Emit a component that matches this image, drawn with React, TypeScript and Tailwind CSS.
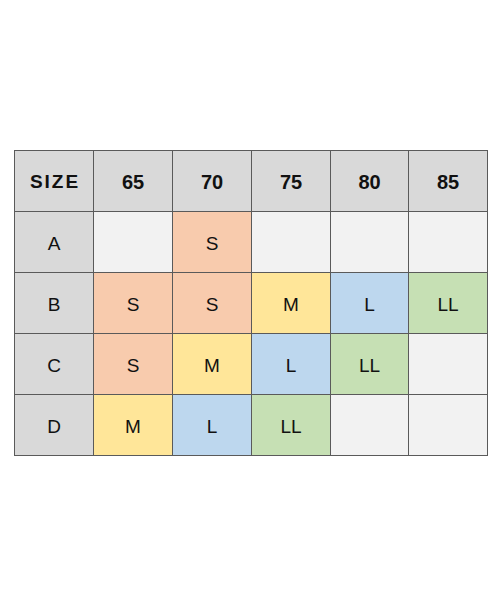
import React from 'react';

type Size = 'S' | 'M' | 'L' | 'LL' | '';

const colours: Record<Size, string> = {
  S: 'bg-[#f8cbad]',
  M: 'bg-[#ffe699]',
  L: 'bg-[#bdd7ee]',
  LL: 'bg-[#c6e0b4]',
  '': 'bg-[#f2f2f2]',
};

const bands = ['65', '70', '75', '80', '85'];

const rows: { cup: string; sizes: Size[] }[] = [
  { cup: 'A', sizes: ['', 'S', '', '', ''] },
  { cup: 'B', sizes: ['S', 'S', 'M', 'L', 'LL'] },
  { cup: 'C', sizes: ['S', 'M', 'L', 'LL', ''] },
  { cup: 'D', sizes: ['M', 'L', 'LL', '', ''] },
];

const App: React.FC = () => {
  return (
    <div className="w-[500px] h-[600px] bg-white font-['Liberation_Sans',Arial,sans-serif] text-[#111]">
      <div className="pt-[150px] pl-[14px]">
        <div className="grid grid-cols-[78px_78px_78px_78px_77px_78px] auto-rows-[60px] gap-px p-px bg-[#5a5a5a] w-fit">
          {/* Header */}
          <div className="bg-[#d9d9d9] flex items-center justify-center pt-[2px] text-[19px] font-bold tracking-[2px] pl-[2px]">
            SIZE
          </div>
          {bands.map((b) => (
            <div key={b} className="bg-[#d9d9d9] flex items-center justify-center pt-[2px] text-[20px] font-bold">
              {b}
            </div>
          ))}

          {/* Body */}
          {rows.map((row) => (
            <React.Fragment key={row.cup}>
              <div className="bg-[#d9d9d9] flex items-center justify-center pt-[4px] text-[19px]">
                {row.cup}
              </div>
              {row.sizes.map((s, i) => (
                <div key={i} className={`${colours[s]} flex items-center justify-center pt-[4px] text-[19px]`}>
                  {s}
                </div>
              ))}
            </React.Fragment>
          ))}
        </div>
      </div>
    </div>
  );
};

export default App;
